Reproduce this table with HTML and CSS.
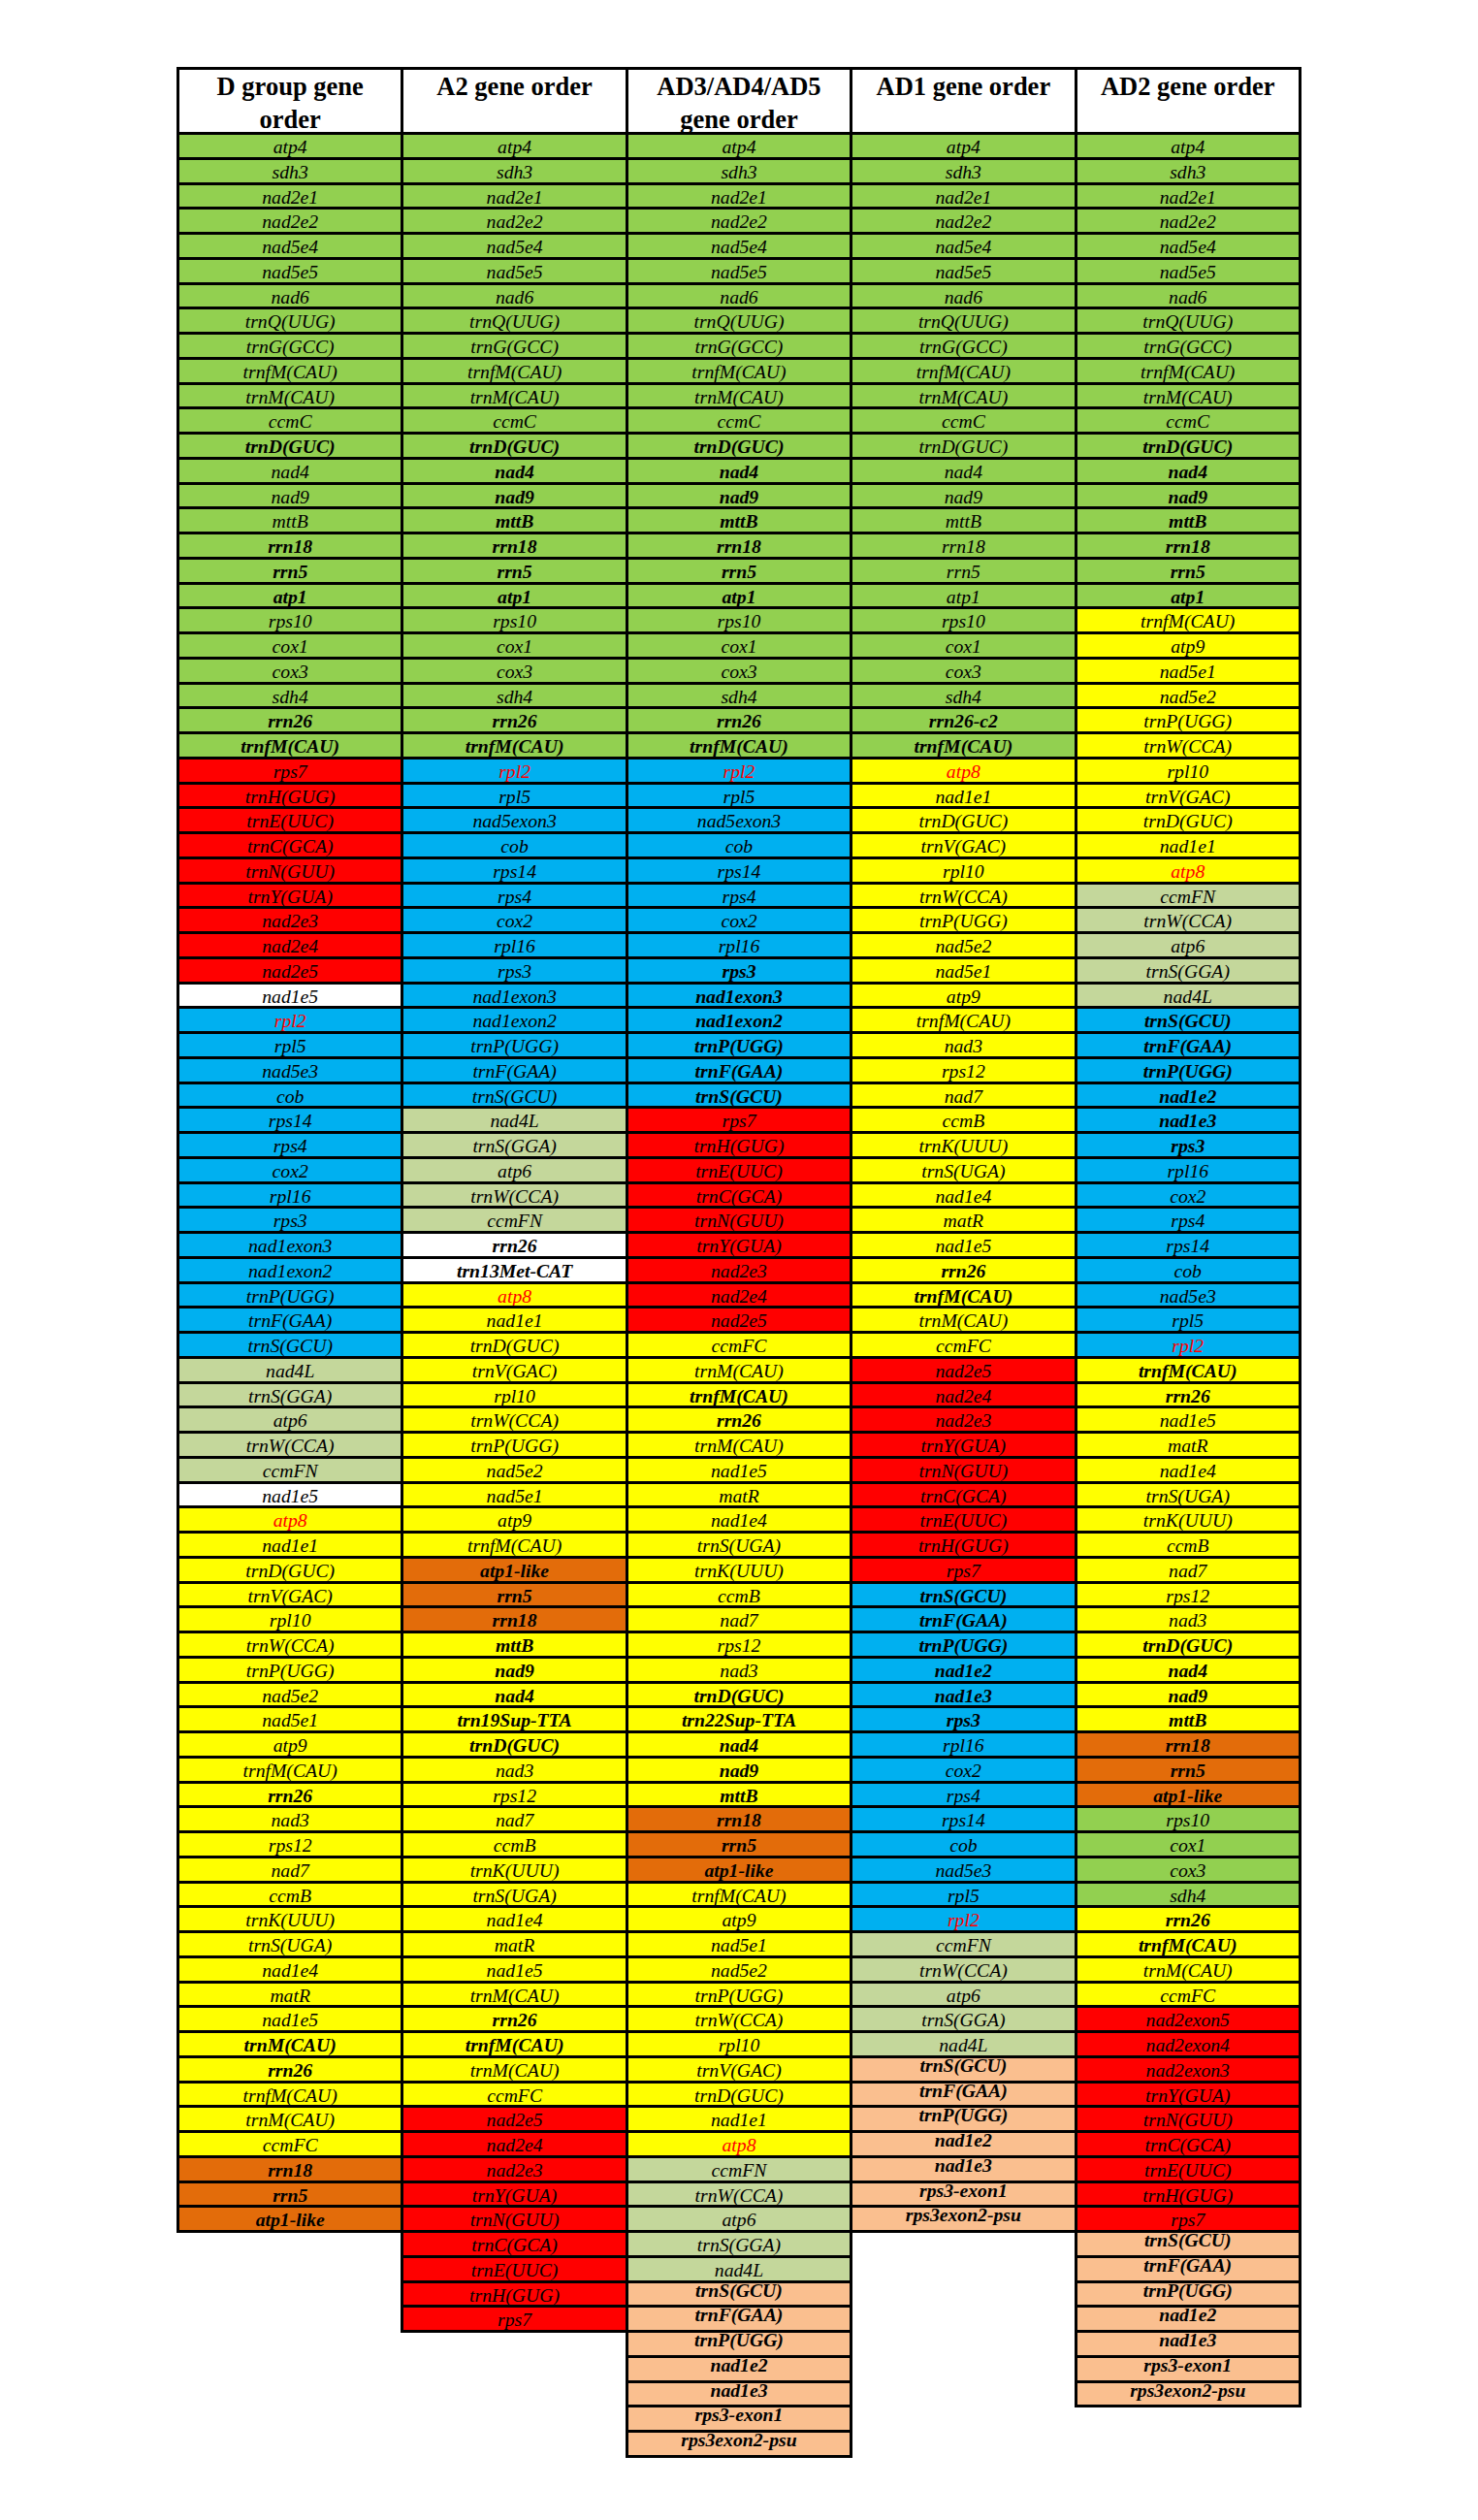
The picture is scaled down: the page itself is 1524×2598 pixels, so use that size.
FILE: index.html
```html
<!DOCTYPE html>
<html lang="en">
<head>
<meta charset="utf-8">
<title>Gene order comparison</title>
<link rel="stylesheet" href="styles.css">
</head>
<body>
<div class="gene-table">
  <div class="col">
    <div class="head">D group gene<br>order</div>
    <div class="c g">atp4</div>
    <div class="c g">sdh3</div>
    <div class="c g">nad2e1</div>
    <div class="c g">nad2e2</div>
    <div class="c g">nad5e4</div>
    <div class="c g">nad5e5</div>
    <div class="c g">nad6</div>
    <div class="c g">trnQ(UUG)</div>
    <div class="c g">trnG(GCC)</div>
    <div class="c g">trnfM(CAU)</div>
    <div class="c g">trnM(CAU)</div>
    <div class="c g">ccmC</div>
    <div class="c g bd">trnD(GUC)</div>
    <div class="c g">nad4</div>
    <div class="c g">nad9</div>
    <div class="c g">mttB</div>
    <div class="c g bd">rrn18</div>
    <div class="c g bd">rrn5</div>
    <div class="c g bd">atp1</div>
    <div class="c g">rps10</div>
    <div class="c g">cox1</div>
    <div class="c g">cox3</div>
    <div class="c g">sdh4</div>
    <div class="c g bd">rrn26</div>
    <div class="c g bd">trnfM(CAU)</div>
    <div class="c r">rps7</div>
    <div class="c r">trnH(GUG)</div>
    <div class="c r">trnE(UUC)</div>
    <div class="c r">trnC(GCA)</div>
    <div class="c r">trnN(GUU)</div>
    <div class="c r">trnY(GUA)</div>
    <div class="c r">nad2e3</div>
    <div class="c r">nad2e4</div>
    <div class="c r">nad2e5</div>
    <div class="c w">nad1e5</div>
    <div class="c b rt">rpl2</div>
    <div class="c b">rpl5</div>
    <div class="c b">nad5e3</div>
    <div class="c b">cob</div>
    <div class="c b">rps14</div>
    <div class="c b">rps4</div>
    <div class="c b">cox2</div>
    <div class="c b">rpl16</div>
    <div class="c b">rps3</div>
    <div class="c b">nad1exon3</div>
    <div class="c b">nad1exon2</div>
    <div class="c b">trnP(UGG)</div>
    <div class="c b">trnF(GAA)</div>
    <div class="c b">trnS(GCU)</div>
    <div class="c l">nad4L</div>
    <div class="c l">trnS(GGA)</div>
    <div class="c l">atp6</div>
    <div class="c l">trnW(CCA)</div>
    <div class="c l">ccmFN</div>
    <div class="c w">nad1e5</div>
    <div class="c y rt">atp8</div>
    <div class="c y">nad1e1</div>
    <div class="c y">trnD(GUC)</div>
    <div class="c y">trnV(GAC)</div>
    <div class="c y">rpl10</div>
    <div class="c y">trnW(CCA)</div>
    <div class="c y">trnP(UGG)</div>
    <div class="c y">nad5e2</div>
    <div class="c y">nad5e1</div>
    <div class="c y">atp9</div>
    <div class="c y">trnfM(CAU)</div>
    <div class="c y bd">rrn26</div>
    <div class="c y">nad3</div>
    <div class="c y">rps12</div>
    <div class="c y">nad7</div>
    <div class="c y">ccmB</div>
    <div class="c y">trnK(UUU)</div>
    <div class="c y">trnS(UGA)</div>
    <div class="c y">nad1e4</div>
    <div class="c y">matR</div>
    <div class="c y">nad1e5</div>
    <div class="c y bd">trnM(CAU)</div>
    <div class="c y bd">rrn26</div>
    <div class="c y">trnfM(CAU)</div>
    <div class="c y">trnM(CAU)</div>
    <div class="c y">ccmFC</div>
    <div class="c o bd">rrn18</div>
    <div class="c o bd">rrn5</div>
    <div class="c o bd">atp1-like</div>
  </div>

  <div class="col">
    <div class="head">A2 gene order</div>
    <div class="c g">atp4</div>
    <div class="c g">sdh3</div>
    <div class="c g">nad2e1</div>
    <div class="c g">nad2e2</div>
    <div class="c g">nad5e4</div>
    <div class="c g">nad5e5</div>
    <div class="c g">nad6</div>
    <div class="c g">trnQ(UUG)</div>
    <div class="c g">trnG(GCC)</div>
    <div class="c g">trnfM(CAU)</div>
    <div class="c g">trnM(CAU)</div>
    <div class="c g">ccmC</div>
    <div class="c g bd">trnD(GUC)</div>
    <div class="c g bd">nad4</div>
    <div class="c g bd">nad9</div>
    <div class="c g bd">mttB</div>
    <div class="c g bd">rrn18</div>
    <div class="c g bd">rrn5</div>
    <div class="c g bd">atp1</div>
    <div class="c g">rps10</div>
    <div class="c g">cox1</div>
    <div class="c g">cox3</div>
    <div class="c g">sdh4</div>
    <div class="c g bd">rrn26</div>
    <div class="c g bd">trnfM(CAU)</div>
    <div class="c b rt">rpl2</div>
    <div class="c b">rpl5</div>
    <div class="c b">nad5exon3</div>
    <div class="c b">cob</div>
    <div class="c b">rps14</div>
    <div class="c b">rps4</div>
    <div class="c b">cox2</div>
    <div class="c b">rpl16</div>
    <div class="c b">rps3</div>
    <div class="c b">nad1exon3</div>
    <div class="c b">nad1exon2</div>
    <div class="c b">trnP(UGG)</div>
    <div class="c b">trnF(GAA)</div>
    <div class="c b">trnS(GCU)</div>
    <div class="c l">nad4L</div>
    <div class="c l">trnS(GGA)</div>
    <div class="c l">atp6</div>
    <div class="c l">trnW(CCA)</div>
    <div class="c l">ccmFN</div>
    <div class="c w bd">rrn26</div>
    <div class="c w bd">trn13Met-CAT</div>
    <div class="c y rt">atp8</div>
    <div class="c y">nad1e1</div>
    <div class="c y">trnD(GUC)</div>
    <div class="c y">trnV(GAC)</div>
    <div class="c y">rpl10</div>
    <div class="c y">trnW(CCA)</div>
    <div class="c y">trnP(UGG)</div>
    <div class="c y">nad5e2</div>
    <div class="c y">nad5e1</div>
    <div class="c y">atp9</div>
    <div class="c y">trnfM(CAU)</div>
    <div class="c o bd">atp1-like</div>
    <div class="c o bd">rrn5</div>
    <div class="c o bd">rrn18</div>
    <div class="c y bd">mttB</div>
    <div class="c y bd">nad9</div>
    <div class="c y bd">nad4</div>
    <div class="c y bd">trn19Sup-TTA</div>
    <div class="c y bd">trnD(GUC)</div>
    <div class="c y">nad3</div>
    <div class="c y">rps12</div>
    <div class="c y">nad7</div>
    <div class="c y">ccmB</div>
    <div class="c y">trnK(UUU)</div>
    <div class="c y">trnS(UGA)</div>
    <div class="c y">nad1e4</div>
    <div class="c y">matR</div>
    <div class="c y">nad1e5</div>
    <div class="c y">trnM(CAU)</div>
    <div class="c y bd">rrn26</div>
    <div class="c y bd">trnfM(CAU)</div>
    <div class="c y">trnM(CAU)</div>
    <div class="c y">ccmFC</div>
    <div class="c r">nad2e5</div>
    <div class="c r">nad2e4</div>
    <div class="c r">nad2e3</div>
    <div class="c r">trnY(GUA)</div>
    <div class="c r">trnN(GUU)</div>
    <div class="c r">trnC(GCA)</div>
    <div class="c r">trnE(UUC)</div>
    <div class="c r">trnH(GUG)</div>
    <div class="c r">rps7</div>
  </div>

  <div class="col">
    <div class="head">AD3/AD4/AD5<br>gene order</div>
    <div class="c g">atp4</div>
    <div class="c g">sdh3</div>
    <div class="c g">nad2e1</div>
    <div class="c g">nad2e2</div>
    <div class="c g">nad5e4</div>
    <div class="c g">nad5e5</div>
    <div class="c g">nad6</div>
    <div class="c g">trnQ(UUG)</div>
    <div class="c g">trnG(GCC)</div>
    <div class="c g">trnfM(CAU)</div>
    <div class="c g">trnM(CAU)</div>
    <div class="c g">ccmC</div>
    <div class="c g bd">trnD(GUC)</div>
    <div class="c g bd">nad4</div>
    <div class="c g bd">nad9</div>
    <div class="c g bd">mttB</div>
    <div class="c g bd">rrn18</div>
    <div class="c g bd">rrn5</div>
    <div class="c g bd">atp1</div>
    <div class="c g">rps10</div>
    <div class="c g">cox1</div>
    <div class="c g">cox3</div>
    <div class="c g">sdh4</div>
    <div class="c g bd">rrn26</div>
    <div class="c g bd">trnfM(CAU)</div>
    <div class="c b rt">rpl2</div>
    <div class="c b">rpl5</div>
    <div class="c b">nad5exon3</div>
    <div class="c b">cob</div>
    <div class="c b">rps14</div>
    <div class="c b">rps4</div>
    <div class="c b">cox2</div>
    <div class="c b">rpl16</div>
    <div class="c b bd">rps3</div>
    <div class="c b bd">nad1exon3</div>
    <div class="c b bd">nad1exon2</div>
    <div class="c b bd">trnP(UGG)</div>
    <div class="c b bd">trnF(GAA)</div>
    <div class="c b bd">trnS(GCU)</div>
    <div class="c r">rps7</div>
    <div class="c r">trnH(GUG)</div>
    <div class="c r">trnE(UUC)</div>
    <div class="c r">trnC(GCA)</div>
    <div class="c r">trnN(GUU)</div>
    <div class="c r">trnY(GUA)</div>
    <div class="c r">nad2e3</div>
    <div class="c r">nad2e4</div>
    <div class="c r">nad2e5</div>
    <div class="c y">ccmFC</div>
    <div class="c y">trnM(CAU)</div>
    <div class="c y bd">trnfM(CAU)</div>
    <div class="c y bd">rrn26</div>
    <div class="c y">trnM(CAU)</div>
    <div class="c y">nad1e5</div>
    <div class="c y">matR</div>
    <div class="c y">nad1e4</div>
    <div class="c y">trnS(UGA)</div>
    <div class="c y">trnK(UUU)</div>
    <div class="c y">ccmB</div>
    <div class="c y">nad7</div>
    <div class="c y">rps12</div>
    <div class="c y">nad3</div>
    <div class="c y bd">trnD(GUC)</div>
    <div class="c y bd">trn22Sup-TTA</div>
    <div class="c y bd">nad4</div>
    <div class="c y bd">nad9</div>
    <div class="c y bd">mttB</div>
    <div class="c o bd">rrn18</div>
    <div class="c o bd">rrn5</div>
    <div class="c o bd">atp1-like</div>
    <div class="c y">trnfM(CAU)</div>
    <div class="c y">atp9</div>
    <div class="c y">nad5e1</div>
    <div class="c y">nad5e2</div>
    <div class="c y">trnP(UGG)</div>
    <div class="c y">trnW(CCA)</div>
    <div class="c y">rpl10</div>
    <div class="c y">trnV(GAC)</div>
    <div class="c y">trnD(GUC)</div>
    <div class="c y">nad1e1</div>
    <div class="c y rt">atp8</div>
    <div class="c l">ccmFN</div>
    <div class="c l">trnW(CCA)</div>
    <div class="c l">atp6</div>
    <div class="c l">trnS(GGA)</div>
    <div class="c l">nad4L</div>
    <div class="c p bd">trnS(GCU)</div>
    <div class="c p bd">trnF(GAA)</div>
    <div class="c p bd">trnP(UGG)</div>
    <div class="c p bd">nad1e2</div>
    <div class="c p bd">nad1e3</div>
    <div class="c p bd">rps3-exon1</div>
    <div class="c p bd">rps3exon2-psu</div>
  </div>

  <div class="col">
    <div class="head">AD1 gene order</div>
    <div class="c g">atp4</div>
    <div class="c g">sdh3</div>
    <div class="c g">nad2e1</div>
    <div class="c g">nad2e2</div>
    <div class="c g">nad5e4</div>
    <div class="c g">nad5e5</div>
    <div class="c g">nad6</div>
    <div class="c g">trnQ(UUG)</div>
    <div class="c g">trnG(GCC)</div>
    <div class="c g">trnfM(CAU)</div>
    <div class="c g">trnM(CAU)</div>
    <div class="c g">ccmC</div>
    <div class="c g">trnD(GUC)</div>
    <div class="c g">nad4</div>
    <div class="c g">nad9</div>
    <div class="c g">mttB</div>
    <div class="c g">rrn18</div>
    <div class="c g">rrn5</div>
    <div class="c g">atp1</div>
    <div class="c g">rps10</div>
    <div class="c g">cox1</div>
    <div class="c g">cox3</div>
    <div class="c g">sdh4</div>
    <div class="c g bd">rrn26-c2</div>
    <div class="c g bd">trnfM(CAU)</div>
    <div class="c y rt">atp8</div>
    <div class="c y">nad1e1</div>
    <div class="c y">trnD(GUC)</div>
    <div class="c y">trnV(GAC)</div>
    <div class="c y">rpl10</div>
    <div class="c y">trnW(CCA)</div>
    <div class="c y">trnP(UGG)</div>
    <div class="c y">nad5e2</div>
    <div class="c y">nad5e1</div>
    <div class="c y">atp9</div>
    <div class="c y">trnfM(CAU)</div>
    <div class="c y">nad3</div>
    <div class="c y">rps12</div>
    <div class="c y">nad7</div>
    <div class="c y">ccmB</div>
    <div class="c y">trnK(UUU)</div>
    <div class="c y">trnS(UGA)</div>
    <div class="c y">nad1e4</div>
    <div class="c y">matR</div>
    <div class="c y">nad1e5</div>
    <div class="c y bd">rrn26</div>
    <div class="c y bd">trnfM(CAU)</div>
    <div class="c y">trnM(CAU)</div>
    <div class="c y">ccmFC</div>
    <div class="c r">nad2e5</div>
    <div class="c r">nad2e4</div>
    <div class="c r">nad2e3</div>
    <div class="c r">trnY(GUA)</div>
    <div class="c r">trnN(GUU)</div>
    <div class="c r">trnC(GCA)</div>
    <div class="c r">trnE(UUC)</div>
    <div class="c r">trnH(GUG)</div>
    <div class="c r">rps7</div>
    <div class="c b bd">trnS(GCU)</div>
    <div class="c b bd">trnF(GAA)</div>
    <div class="c b bd">trnP(UGG)</div>
    <div class="c b bd">nad1e2</div>
    <div class="c b bd">nad1e3</div>
    <div class="c b bd">rps3</div>
    <div class="c b">rpl16</div>
    <div class="c b">cox2</div>
    <div class="c b">rps4</div>
    <div class="c b">rps14</div>
    <div class="c b">cob</div>
    <div class="c b">nad5e3</div>
    <div class="c b">rpl5</div>
    <div class="c b rt">rpl2</div>
    <div class="c l">ccmFN</div>
    <div class="c l">trnW(CCA)</div>
    <div class="c l">atp6</div>
    <div class="c l">trnS(GGA)</div>
    <div class="c l">nad4L</div>
    <div class="c p bd">trnS(GCU)</div>
    <div class="c p bd">trnF(GAA)</div>
    <div class="c p bd">trnP(UGG)</div>
    <div class="c p bd">nad1e2</div>
    <div class="c p bd">nad1e3</div>
    <div class="c p bd">rps3-exon1</div>
    <div class="c p bd">rps3exon2-psu</div>
  </div>

  <div class="col">
    <div class="head">AD2 gene order</div>
    <div class="c g">atp4</div>
    <div class="c g">sdh3</div>
    <div class="c g">nad2e1</div>
    <div class="c g">nad2e2</div>
    <div class="c g">nad5e4</div>
    <div class="c g">nad5e5</div>
    <div class="c g">nad6</div>
    <div class="c g">trnQ(UUG)</div>
    <div class="c g">trnG(GCC)</div>
    <div class="c g">trnfM(CAU)</div>
    <div class="c g">trnM(CAU)</div>
    <div class="c g">ccmC</div>
    <div class="c g bd">trnD(GUC)</div>
    <div class="c g bd">nad4</div>
    <div class="c g bd">nad9</div>
    <div class="c g bd">mttB</div>
    <div class="c g bd">rrn18</div>
    <div class="c g bd">rrn5</div>
    <div class="c g bd">atp1</div>
    <div class="c y">trnfM(CAU)</div>
    <div class="c y">atp9</div>
    <div class="c y">nad5e1</div>
    <div class="c y">nad5e2</div>
    <div class="c y">trnP(UGG)</div>
    <div class="c y">trnW(CCA)</div>
    <div class="c y">rpl10</div>
    <div class="c y">trnV(GAC)</div>
    <div class="c y">trnD(GUC)</div>
    <div class="c y">nad1e1</div>
    <div class="c y rt">atp8</div>
    <div class="c l">ccmFN</div>
    <div class="c l">trnW(CCA)</div>
    <div class="c l">atp6</div>
    <div class="c l">trnS(GGA)</div>
    <div class="c l">nad4L</div>
    <div class="c b bd">trnS(GCU)</div>
    <div class="c b bd">trnF(GAA)</div>
    <div class="c b bd">trnP(UGG)</div>
    <div class="c b bd">nad1e2</div>
    <div class="c b bd">nad1e3</div>
    <div class="c b bd">rps3</div>
    <div class="c b">rpl16</div>
    <div class="c b">cox2</div>
    <div class="c b">rps4</div>
    <div class="c b">rps14</div>
    <div class="c b">cob</div>
    <div class="c b">nad5e3</div>
    <div class="c b">rpl5</div>
    <div class="c b rt">rpl2</div>
    <div class="c y bd">trnfM(CAU)</div>
    <div class="c y bd">rrn26</div>
    <div class="c y">nad1e5</div>
    <div class="c y">matR</div>
    <div class="c y">nad1e4</div>
    <div class="c y">trnS(UGA)</div>
    <div class="c y">trnK(UUU)</div>
    <div class="c y">ccmB</div>
    <div class="c y">nad7</div>
    <div class="c y">rps12</div>
    <div class="c y">nad3</div>
    <div class="c y bd">trnD(GUC)</div>
    <div class="c y bd">nad4</div>
    <div class="c y bd">nad9</div>
    <div class="c y bd">mttB</div>
    <div class="c o bd">rrn18</div>
    <div class="c o bd">rrn5</div>
    <div class="c o bd">atp1-like</div>
    <div class="c g">rps10</div>
    <div class="c g">cox1</div>
    <div class="c g">cox3</div>
    <div class="c g">sdh4</div>
    <div class="c y bd">rrn26</div>
    <div class="c y bd">trnfM(CAU)</div>
    <div class="c y">trnM(CAU)</div>
    <div class="c y">ccmFC</div>
    <div class="c r">nad2exon5</div>
    <div class="c r">nad2exon4</div>
    <div class="c r">nad2exon3</div>
    <div class="c r">trnY(GUA)</div>
    <div class="c r">trnN(GUU)</div>
    <div class="c r">trnC(GCA)</div>
    <div class="c r">trnE(UUC)</div>
    <div class="c r">trnH(GUG)</div>
    <div class="c r">rps7</div>
    <div class="c p bd">trnS(GCU)</div>
    <div class="c p bd">trnF(GAA)</div>
    <div class="c p bd">trnP(UGG)</div>
    <div class="c p bd">nad1e2</div>
    <div class="c p bd">nad1e3</div>
    <div class="c p bd">rps3-exon1</div>
    <div class="c p bd">rps3exon2-psu</div>
  </div>
</div>
</body>
</html>
```

FILE: styles.css
```css
html, body {
  margin: 0;
  padding: 0;
  background: #ffffff;
}

body {
  font-family: "Liberation Serif", "Times New Roman", serif;
  color: #000000;
}

.gene-table {
  display: flex;
  align-items: flex-start;
  margin: 69px 0 0 182px;
}

.col {
  width: 234.4px;
  display: flex;
  flex-direction: column;
  flex: 0 0 auto;
}

.col + .col {
  margin-left: -3px;
}

.head {
  box-sizing: border-box;
  height: 70px;
  border: 3px solid #000;
  background: #ffffff;
  padding: 0 4px;
  text-align: center;
  font-weight: bold;
  font-size: 26.5px;
  line-height: 34px;
  white-space: nowrap;
}

.c {
  box-sizing: border-box;
  height: 28.76px;
  margin-top: -3px;
  border: 3px solid #000;
  text-align: center;
  font-style: italic;
  font-size: 19.7px;
  line-height: 25px;
  white-space: nowrap;
  overflow: visible;
}

.g { background: #92d050; }
.r { background: #ff0000; }
.b { background: #00b0f0; }
.y { background: #ffff00; }
.o { background: #e36c0a; }
.l { background: #c4d79b; }
.p { background: #fabf8f; line-height: 15px; }
.w { background: #ffffff; }

.bd { font-weight: bold; }
.rt { color: #ff0000; }
```
